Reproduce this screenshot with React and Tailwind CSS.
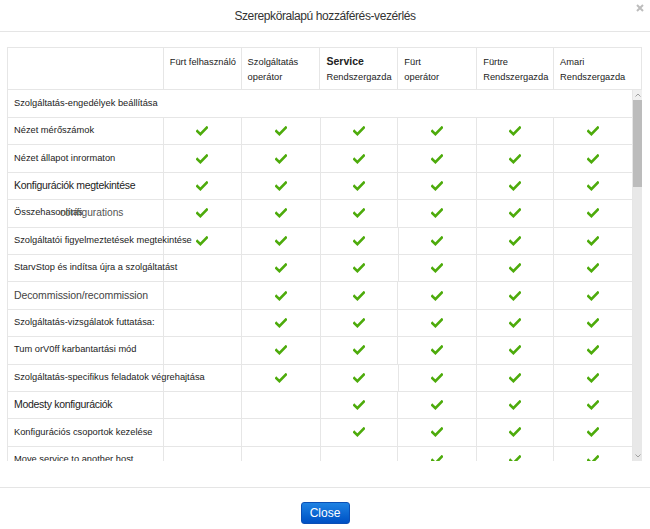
import React from "react";

const Check = () => (
  <svg width="12" height="10" viewBox="0 0 12 10" className="block">
    <path d="M1.3 5.2 L4.4 8.2 L10.8 1.6" fill="none" stroke="#4dab0b" strokeWidth="2.6" strokeLinecap="square" strokeLinejoin="miter" />
  </svg>
);

const rows = [
  { label: "Nézet mérőszámok", from: 0 },
  { label: "Nézet állapot inrormaton", from: 0 },
  { label: "Konfigurációk megtekintése", from: 0, big: "tight" },
  { label: "Összehasonlítás", from: 0, overlay: "configurations" },
  { label: "Szolgáltatói figyelmeztetések megtekintése", from: 0 },
  { label: "StarvStop és indítsa újra a szolgáltatást", from: 1 },
  { label: "Decommission/recommission", from: 1, big: "loose", gray: true },
  { label: "Szolgáltatás-vizsgálatok futtatása:", from: 1 },
  { label: "Tum orV0ff karbantartási mód", from: 1 },
  { label: "Szolgáltatás-specifikus feladatok végrehajtása", from: 1 },
  { label: "Modesty konfigurációk", from: 2, big: "tight" },
  { label: "Konfigurációs csoportok kezelése", from: 2 },
  { label: "Move service to another host", from: 3 },
];

const headers = [
  ["Fürt felhasználó"],
  ["Szolgáltatás", "operátor"],
  ["Service", "Rendszergazda"],
  ["Fürt", "operátor"],
  ["Fürtre", "Rendszergazda"],
  ["Amari", "Rendszergazda"],
];

const colW = ["w-[78px]", "w-[79px]", "w-[78px]", "w-[79px]", "w-[77px]", "w-[79px]"];

function labelClass(r) {
  if (r.big === "tight") return "text-[10.5px] tracking-[-0.3px] text-[#222]";
  if (r.big === "loose") return "text-[10.5px] tracking-[-0.1px] text-[#444]";
  return "text-[9.3px] text-[#222]";
}

export default function App() {
  return (
    <div className="w-[650px] h-[529px] bg-white flex flex-col text-[#333]" style={{ fontFamily: '"Liberation Sans", Arial, sans-serif' }}>
      {/* Title */}
      <div className="relative h-[32px] border-b border-[#e5e5e5] flex items-center justify-center shrink-0">
        <span className="text-[12px] text-[#333] tracking-[-0.4px]">Szerepköralapú hozzáférés-vezérlés</span>
        <svg className="absolute right-[6px] top-[4px]" width="8" height="8" viewBox="0 0 8 8">
          <path d="M1 1 L7 7 M7 1 L1 7" stroke="#bdbdbd" strokeWidth="2" />
        </svg>
      </div>

      {/* Body */}
      <div className="pt-[15px] pl-[7px] pr-[8px] pb-[26px] shrink-0">
        <div className="w-[635px] border-l border-t border-[#e6e6e6]">
          {/* header row */}
          <div className="flex h-[42px] border-b border-[#e6e6e6]">
            <div className="w-[156px] border-r border-[#e6e6e6]" />
            {headers.map((h, i) => (
              <div key={i} className={`${i === 5 ? "w-[88px]" : colW[i]} border-r border-[#e6e6e6] pl-[6px] pt-[7px] text-[9.3px] leading-[15px] text-[#222] whitespace-nowrap`}>
                {h.map((t, j) => (
                  <div key={j} className={i === 2 && j === 0 ? "font-bold text-[10.5px] leading-[13px] mb-[2px]" : ""}>{t}</div>
                ))}
              </div>
            ))}
          </div>
          {/* scroll area */}
          <div className="flex h-[371px]">
            <div className="w-[626px] overflow-hidden">
              <div className="h-[28px] border-b border-r border-[#e6e6e6] flex items-center pl-[6px] text-[9.3px] text-[#222]">
                Szolgáltatás-engedélyek beállítása
              </div>
              {rows.map((r, ri) => (
                <div key={ri} className="flex h-[27.4px] border-b border-[#e6e6e6]">
                  <div className="relative w-[156px] border-r border-[#e6e6e6] flex items-center pl-[6px] whitespace-nowrap overflow-visible z-10">
                    <span className={labelClass(r)}>{r.label}</span>
                    {r.overlay && (
                      <span className="absolute left-[52px] top-1/2 -translate-y-1/2 text-[10.2px] text-[#555]">{r.overlay}</span>
                    )}
                  </div>
                  {colW.map((w, ci) => (
                    <div key={ci} className={`${w} border-r border-[#e6e6e6] flex items-center justify-center`}>
                      {ci >= r.from && <Check />}
                    </div>
                  ))}
                </div>
              ))}
            </div>
            {/* fake scrollbar */}
            <div className="w-[9px] bg-[#e8e8e8] flex flex-col">
              <div className="h-[10px] bg-[#f0f0f0] flex items-center justify-center">
                <svg width="6" height="4" viewBox="0 0 6 4"><path d="M0.5 3.5 L3 1 L5.5 3.5" fill="none" stroke="#a0a0a0" strokeWidth="1" /></svg>
              </div>
              <div className="h-[87px] bg-[#bcbcbc]" />
              <div className="flex-1" />
              <div className="h-[10px] flex items-center justify-center">
                <svg width="6" height="4" viewBox="0 0 6 4"><path d="M0.5 0.5 L3 3 L5.5 0.5" fill="none" stroke="#a0a0a0" strokeWidth="1" /></svg>
              </div>
            </div>
          </div>
        </div>
      </div>

      {/* Footer */}
      <div className="border-t border-[#e5e5e5] flex justify-center pt-[14px]">
        <button className="w-[49px] h-[22px] rounded-[3px] border border-[#0a4fb5] bg-gradient-to-b from-[#1f82e3] to-[#0050c4] text-white text-[12px] leading-none">
          Close
        </button>
      </div>
    </div>
  );
}
